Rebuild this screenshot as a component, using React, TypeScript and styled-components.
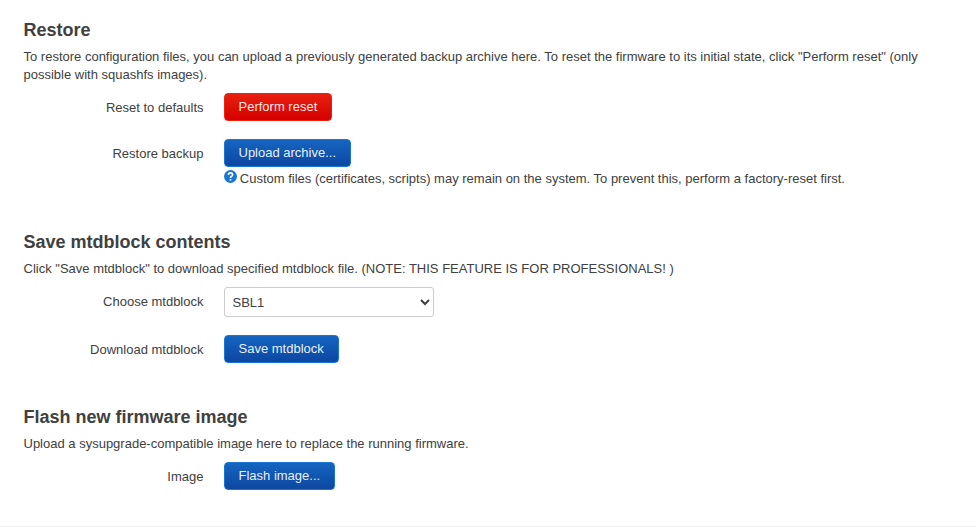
import React from "react";
import styled, { createGlobalStyle } from "styled-components";

const GlobalStyle = createGlobalStyle`
  *, *::before, *::after { box-sizing: border-box; }
  body {
    margin: 0;
    background: #fff;
    color: #404040;
    font: 13px/18px "Liberation Sans", Arial, sans-serif;
  }
`;

const Page = styled.main`
  height: 527px;
  padding: 12px 24.5px 0 23.5px;
  border-bottom: 1px solid #eee;
`;

const Section = styled.section<{ $gap: number }>`
  margin-bottom: ${(p) => p.$gap}px;
`;

const Title = styled.h3`
  margin: 0;
  font-size: 18px;
  line-height: 36px;
  font-weight: 700;
`;

const Description = styled.p`
  margin: 0 0 9px;
`;

const Row = styled.div`
  display: grid;
  grid-template-columns: 180px 1fr;
  column-gap: 20px;
  margin-bottom: 18px;
`;

const Label = styled.label`
  padding-top: 6px;
  text-align: right;
`;

const Field = styled.div`
  display: flex;
  flex-direction: column;
  align-items: flex-start;
`;

const Button = styled.button<{ $danger?: boolean }>`
  height: 28px;
  padding: 5px 14px;
  border: 1px solid ${(p) => (p.$danger ? "#f0200c" : "#1976d2")};
  border-radius: 4px;
  background: ${(p) =>
    p.$danger
      ? "linear-gradient(#e8200f, #d50000)"
      : "linear-gradient(#1565c0, #0d47a1)"};
  color: rgba(255, 255, 255, 0.93);
  font: 13px/16px "Liberation Sans", Arial, sans-serif;
`;

const Select = styled.select`
  width: 210px;
  height: 30px;
  padding: 4px;
  border: 1px solid #ccc;
  border-radius: 3px;
  background: #fff;
  color: #404040;
  font: 13px/18px "Liberation Sans", Arial, sans-serif;
`;

const Hint = styled.div`
  display: flex;
  gap: 3.3px;
  padding-top: 3px;
`;

const HelpMark = styled.svg`
  width: 13px;
  height: 13px;
`;

export default function App() {
  return (
    <>
      <GlobalStyle />
      <Page>
        <Section $gap={36}>
          <Title>Restore</Title>
          <Description>
            To restore configuration files, you can upload a previously generated backup archive
            here. To reset the firmware to its initial state, click "Perform reset" (only possible
            with squashfs images).
          </Description>
          <Row>
            <Label>Reset to defaults</Label>
            <Field><Button $danger>Perform reset</Button></Field>
          </Row>
          <Row>
            <Label>Restore backup</Label>
            <Field>
              <Button>Upload archive...</Button>
              <Hint>
                <HelpMark viewBox="0 0 13 13">
                  <circle cx="6.5" cy="6.5" r="6.5" fill="#1976d2" />
                  <path d="M4.4 4.9Q4.4 2.9 6.5 2.9T8.6 4.7Q8.6 5.6 7.5 6.3Q6.5 6.9 6.5 8.1" fill="none" stroke="#fff" strokeWidth="1.6" />
                  <rect x="5.7" y="9" width="1.6" height="1.6" fill="#fff" />
                </HelpMark>
                Custom files (certificates, scripts) may remain on the system. To prevent this,
                perform a factory-reset first.
              </Hint>
            </Field>
          </Row>
        </Section>
        <Section $gap={36}>
          <Title>Save mtdblock contents</Title>
          <Description>
            Click "Save mtdblock" to download specified mtdblock file. (NOTE: THIS FEATURE IS FOR
            PROFESSIONALS! )
          </Description>
          <Row>
            <Label htmlFor="mtdblock">Choose mtdblock</Label>
            <Field>
              <Select id="mtdblock"><option>SBL1</option></Select>
            </Field>
          </Row>
          <Row>
            <Label>Download mtdblock</Label>
            <Field><Button>Save mtdblock</Button></Field>
          </Row>
        </Section>
        <Section $gap={0}>
          <Title>Flash new firmware image</Title>
          <Description>
            Upload a sysupgrade-compatible image here to replace the running firmware.
          </Description>
          <Row>
            <Label>Image</Label>
            <Field><Button>Flash image...</Button></Field>
          </Row>
        </Section>
      </Page>
    </>
  );
}
